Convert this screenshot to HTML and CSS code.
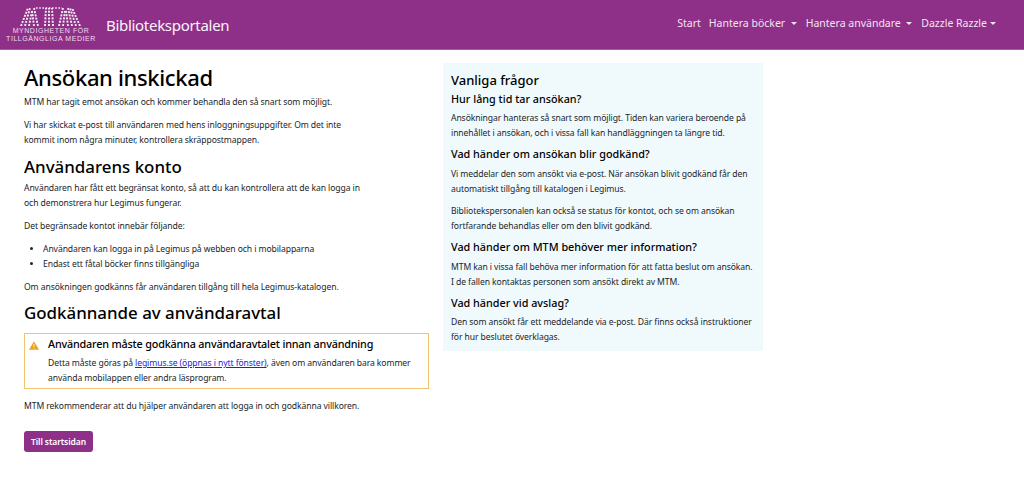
FILE: index.html
```html
<!DOCTYPE html>
<html lang="sv">
<head>
<meta charset="utf-8">
<title>Biblioteksportalen</title>
<link rel="stylesheet" href="styles.css">
</head>
<body>
<header class="navbar">
  <a class="brand">
    <span class="logo">
      <svg class="logo-mark" viewBox="0 0 66 20" width="66" height="20" aria-hidden="true">
        <g fill="none" stroke="#f6ecf6" stroke-width="1.9" stroke-dasharray="2 1.3">
          <path d="M3 20 L10 2"/><path d="M7 20 L12 2"/><path d="M11 20 L14 5"/>
          <path d="M16 20 L14 5"/><path d="M20 20 L16 2"/>
          <path d="M27 20 L28 2"/><path d="M31 20 L31 2"/><path d="M35 20 L34 2"/>
          <path d="M41 20 L45 2"/><path d="M45 20 L47 5"/>
          <path d="M50 20 L48 5"/><path d="M54 20 L50 2"/>
          <path d="M58 20 L52 2"/><path d="M62 20 L54 2"/>
        </g>
        <path class="logo-bar" d="M18 2 H44"/>
      </svg>
      <span class="logo-text">MYNDIGHETEN FÖR<br>TILLGÄNGLIGA MEDIER</span>
    </span>
    <span class="brand-name">Biblioteksportalen</span>
  </a>
  <nav class="nav">
    <a class="start">Start</a>
    <a class="dd">Hantera böcker</a>
    <a class="dd">Hantera användare</a>
    <a class="dd tight">Dazzle Razzle</a>
  </nav>
</header>
<main class="page">
  <section class="main-col">
    <h1>Ansökan inskickad</h1>
    <p>MTM har tagit emot ansökan och kommer behandla den så snart som möjligt.</p>
    <p>Vi har skickat e-post till användaren med hens inloggningsuppgifter. Om det inte<br>kommit inom några minuter, kontrollera skräppostmappen.</p>
    <h2 class="h2-first">Användarens konto</h2>
    <p>Användaren har fått ett begränsat konto, så att du kan kontrollera att de kan logga in<br>och demonstrera hur Legimus fungerar.</p>
    <p>Det begränsade kontot innebär följande:</p>
    <ul>
      <li>Användaren kan logga in på Legimus på webben och i mobilapparna</li>
      <li>Endast ett fåtal böcker finns tillgängliga</li>
    </ul>
    <p>Om ansökningen godkänns får användaren tillgång till hela Legimus-katalogen.</p>
    <h2 class="h2-second">Godkännande av användaravtal</h2>
    <div class="alert">
      <svg class="alert-icon" viewBox="0 0 12 10" width="10" height="9" aria-hidden="true"><path fill="#e8a317" d="M6 0 L12 10 H0 Z"/><path fill="#fff" d="M5.5 3h1v3.6h-1zM5.5 7.4h1v1.2h-1z"/></svg>
      <div>
        <h3>Användaren måste godkänna användaravtalet innan användning</h3>
        <p>Detta måste göras på <a class="link">legimus.se (öppnas i nytt fönster)</a>, även om användaren bara kommer<br>använda mobilappen eller andra läsprogram.</p>
      </div>
    </div>
    <p>MTM rekommenderar att du hjälper användaren att logga in och godkänna villkoren.</p>
    <a class="btn">Till startsidan</a>
  </section>
  <aside class="faq">
    <h2 class="faq-title">Vanliga frågor</h2>
    <h3>Hur lång tid tar ansökan?</h3>
    <p>Ansökningar hanteras så snart som möjligt. Tiden kan variera beroende på<br>innehållet i ansökan, och i vissa fall kan handläggningen ta längre tid.</p>
    <h3>Vad händer om ansökan blir godkänd?</h3>
    <p>Vi meddelar den som ansökt via e-post. När ansökan blivit godkänd får den<br>automatiskt tillgång till katalogen i Legimus.</p>
    <p>Bibliotekspersonalen kan också se status för kontot, och se om ansökan<br>fortfarande behandlas eller om den blivit godkänd.</p>
    <h3>Vad händer om MTM behöver mer information?</h3>
    <p>MTM kan i vissa fall behöva mer information för att fatta beslut om ansökan.<br>I de fallen kontaktas personen som ansökt direkt av MTM.</p>
    <h3>Vad händer vid avslag?</h3>
    <p>Den som ansökt får ett meddelande via e-post. Där finns också instruktioner<br>för hur beslutet överklagas.</p>
  </aside>
</main>
</body>
</html>
```
FILE: styles.css
```css
* { box-sizing: border-box; }
html, body { margin: 0; padding: 0; }
body {
  font-family: "Noto Sans", "Open Sans", sans-serif;
  font-size: 8.6px;
  letter-spacing: -0.09px;
  line-height: 15px;
  color: #212529;
  background: #fff;
}
.navbar {
  height: 50px;
  background: #8e3088;
  border-bottom: 1px solid #a65ba1;
  display: flex;
  align-items: center;
  justify-content: space-between;
  padding: 0 28px 0 5px;
  letter-spacing: 0;
}
.brand { display: flex; align-items: center; gap: 9px; color: #fbf3fb; }
.logo { display: flex; flex-direction: column; align-items: center; width: 92px; }
.logo-text {
  font-family: "Liberation Sans", sans-serif;
  font-size: 7px;
  line-height: 8.5px;
  letter-spacing: 0.55px;
  text-align: center;
  color: #f0dcf0;
  white-space: nowrap;
}
.logo-mark { margin-bottom: 1px; }
.logo-bar { fill: none; stroke: #f6ecf6; stroke-width: 1.6; stroke-dasharray: 1.6 1.6; }
.brand-name { font-size: 15px; letter-spacing: -0.3px; line-height: 20px; }
.nav { display: flex; gap: 9px; font-size: 10.5px; color: #f3e3f3; padding-bottom: 2px; }
.nav a { white-space: nowrap; }
.start { margin-right: -1px; }
.dd::after {
  content: "";
  display: inline-block;
  margin-left: 5.5px;
  vertical-align: 2px;
  border-top: 3.5px solid currentColor;
  border-left: 3px solid transparent;
  border-right: 3px solid transparent;
}
.dd.tight::after { margin-left: 3px; }
.page {
  display: flex;
  align-items: flex-start;
  gap: 14px;
  padding: 13px 0 0 24px;
}
.main-col { width: 405px; }
.faq {
  width: 320px;
  background: #f0fafd;
  padding: 9px 8px 1px;
}
h1, h2, h3 { margin: 0; color: #000; font-weight: 500; letter-spacing: 0; }
h1 { font-size: 22px; letter-spacing: -0.35px; line-height: 28px; margin-bottom: 4px; }
h2 { font-size: 16.9px; line-height: 24px; }
h3 { font-size: 10.8px; line-height: 15px; }
p { margin: 0 0 7.5px; }
.h2-first { margin-top: 1px; margin-bottom: 2px; }
.h2-second { margin-top: -1px; margin-bottom: 1px; }
ul { margin: 0 0 7.5px; padding: 1px 0 0 19px; }
.faq h3 { margin-bottom: 5.3px; }
.faq p { margin-bottom: 5.2px; }
.faq p + p { margin-top: 7.5px; }
.faq-title { font-size: 13px; line-height: 16px; margin-bottom: 3px; }
.alert {
  display: flex;
  gap: 9px;
  border: 1px solid #f0c36d;
  padding: 2px 8px 2px 4px;
  margin: 8px 0 10px;
}
.alert-icon { margin-top: 5px; flex: none; }
.alert h3 { margin-bottom: 5px; font-size: 10.8px; letter-spacing: -0.18px; }
.alert p { margin: 0; }
.link { color: #1a22e0; text-decoration: underline; }
.btn {
  display: inline-block;
  margin-top: 9px;
  background: #8e3088;
  color: #fff;
  font-weight: 600;
  font-size: 8.5px;
  line-height: 15px;
  padding: 3px 7px;
  border-radius: 3px;
}
```
